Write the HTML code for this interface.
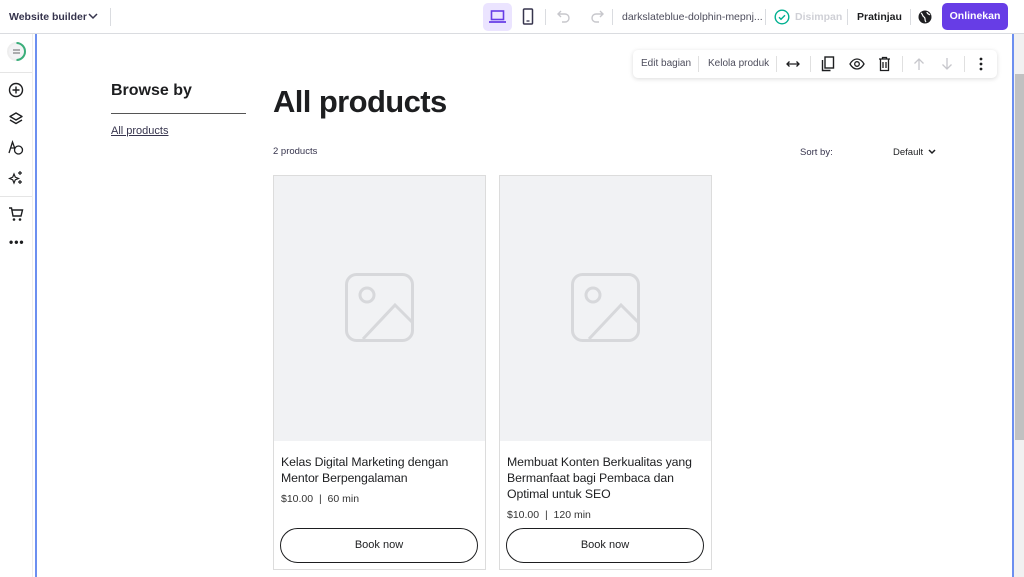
<!DOCTYPE html>
<html><head><meta charset="utf-8"><style>
*{box-sizing:border-box;margin:0;padding:0}
body{width:1024px;height:577px;overflow:hidden;background:#fff;font-family:"Liberation Sans",sans-serif;color:#1d1e20;position:relative}
.top{position:absolute;left:0;top:0;width:1024px;height:34px;border-bottom:1px solid #dadce0;background:#fff}
.abs{position:absolute}
.side{position:absolute;left:0;top:34px;width:35px;height:543px;background:#fff}
.vl{position:absolute;top:34px;width:2px;height:543px;background:#6c8ff0}
svg{display:block}
.card{position:absolute;top:175px;width:213px;height:395px;border:1px solid #dcdcdc;background:#fff}
.img{height:265px;background:#f1f2f4;position:relative}
.img svg{position:absolute;left:71px;top:97px}
.t{position:absolute;left:7px;font-family:"Liberation Sans",sans-serif;font-size:12.3px;line-height:16px;letter-spacing:-0.1px;color:#1d1e20;white-space:nowrap}
.p{position:absolute;left:7px;font-family:"Liberation Sans",sans-serif;font-size:10.5px;color:#333}
.btn{position:absolute;left:6px;width:198px;height:35px;border:1px solid #1d1e20;border-radius:18px;text-align:center;line-height:33px;font-family:"Liberation Sans",sans-serif;font-size:11px}
</style></head><body>
<div class="top">
 <div class="abs" style="left:9px;top:11px;font-size:10.5px;font-weight:bold;color:#36344d">Website builder</div>
 <svg class="abs" style="left:88px;top:12px" width="10" height="8"><path d="M1 2l4 4 4-4" stroke="#36344d" stroke-width="1.5" fill="none"/></svg>
 <div class="abs" style="left:110px;top:8px;width:1px;height:18px;background:#dadce0"></div>
 <div class="abs" style="left:483px;top:3px;width:29px;height:28px;background:#ebe4ff;border-radius:5px"></div>
 <svg class="abs" style="left:489px;top:10px" width="17" height="14"><rect x="2.5" y="1" width="12" height="8.5" stroke="#673de6" stroke-width="1.6" fill="none"/><path d="M0 12h17" stroke="#673de6" stroke-width="1.8"/></svg>
 <svg class="abs" style="left:522px;top:8px" width="12" height="17"><rect x="1.5" y="1" width="9" height="15" rx="1" stroke="#36344d" stroke-width="1.5" fill="none"/><path d="M4.5 13h3" stroke="#36344d" stroke-width="1.3"/></svg>
 <div class="abs" style="left:545px;top:9px;width:1px;height:16px;background:#dadce0"></div>
 <svg class="abs" style="left:557px;top:10px" width="14" height="13"><path d="M4 1L1 4l3 3M1 4h7a4 4 0 010 8H5" stroke="#c7c7cc" stroke-width="1.4" fill="none"/></svg>
 <svg class="abs" style="left:590px;top:10px" width="14" height="13"><path d="M10 1l3 3-3 3M13 4H6a4 4 0 000 8h3" stroke="#c7c7cc" stroke-width="1.4" fill="none"/></svg>
 <div class="abs" style="left:612px;top:9px;width:1px;height:16px;background:#dadce0"></div>
 <div class="abs" style="left:622px;top:11px;font-size:10.5px;color:#4d4d5c">darkslateblue-dolphin-mepnj...</div>
 <div class="abs" style="left:765px;top:9px;width:1px;height:16px;background:#dadce0"></div>
 <svg class="abs" style="left:774px;top:9px" width="16" height="16"><circle cx="8" cy="8" r="6.8" stroke="#00b090" stroke-width="1.4" fill="none"/><path d="M5 8.2l2 2 4-4" stroke="#00b090" stroke-width="1.4" fill="none"/></svg>
 <div class="abs" style="left:795px;top:11px;font-size:10.5px;font-weight:bold;color:#cfd0d6">Disimpan</div>
 <div class="abs" style="left:847px;top:9px;width:1px;height:16px;background:#dadce0"></div>
 <div class="abs" style="left:857px;top:11px;font-size:10.5px;font-weight:bold;color:#1d1e20">Pratinjau</div>
 <div class="abs" style="left:910px;top:9px;width:1px;height:16px;background:#dadce0"></div>
 <svg class="abs" style="left:918px;top:10px" width="14" height="14"><circle cx="7" cy="7" r="6.5" fill="#1d1e20"/><path d="M3 3c2 1 1 3 3 4s0 3 2 5M9 2c0 2 2 2 3 3" stroke="#fff" stroke-width="1.2" fill="none"/></svg>
 <div class="abs" style="left:942px;top:3px;width:66px;height:27px;background:#673de6;border-radius:5px;color:#fff;font-size:10.5px;font-weight:bold;text-align:center;line-height:27px">Onlinekan</div>
</div>
<div class="side">
 <svg class="abs" style="left:6px;top:7px" width="21" height="21"><circle cx="10.5" cy="10.5" r="8.5" stroke="#eee" stroke-width="2" fill="#f3f3f5"/><path d="M10.5 2a8.5 8.5 0 010 17" stroke="#3aae7a" stroke-width="2" fill="none"/><path d="M7 9h7M7 12h7" stroke="#666" stroke-width="1"/></svg>
 <div class="abs" style="left:0;top:38px;width:33px;height:1px;background:#e5e5e5"></div>
 <svg class="abs" style="left:8px;top:48px" width="16" height="16"><circle cx="8" cy="8" r="6.5" stroke="#1d1e20" stroke-width="1.4" fill="none"/><path d="M8 4.5v7M4.5 8h7" stroke="#1d1e20" stroke-width="1.4"/></svg>
 <svg class="abs" style="left:8px;top:77px" width="16" height="16"><path d="M8 2l6 3.5-6 3.5-6-3.5zM2 9l6 3.5 6-3.5" stroke="#1d1e20" stroke-width="1.4" fill="none" stroke-linejoin="round"/></svg>
 <svg class="abs" style="left:8px;top:106px" width="16" height="16"><path d="M1 13L4.5 2 7 9M2.5 8h4" stroke="#1d1e20" stroke-width="1.3" fill="none"/><circle cx="10.5" cy="10" r="4" stroke="#1d1e20" stroke-width="1.3" fill="none"/></svg>
 <svg class="abs" style="left:8px;top:136px" width="16" height="16"><path d="M6 4l1.3 3.2L10.5 8.5 7.3 9.8 6 13 4.7 9.8 1.5 8.5 4.7 7.2z" stroke="#1d1e20" stroke-width="1.2" fill="none"/><path d="M12 1v4M10 3h4M12 10v4M10 12h4" stroke="#1d1e20" stroke-width="1.2"/></svg>
 <div class="abs" style="left:0;top:162px;width:33px;height:1px;background:#e5e5e5"></div>
 <svg class="abs" style="left:8px;top:172px" width="16" height="16"><path d="M1 2h2.5l1.5 8h8l1.5-6H4" stroke="#1d1e20" stroke-width="1.4" fill="none"/><circle cx="6" cy="13.5" r="1.3" fill="#1d1e20"/><circle cx="12" cy="13.5" r="1.3" fill="#1d1e20"/></svg>
 <div class="abs" style="left:9px;top:203px;font-size:12px;font-weight:bold;letter-spacing:1px;color:#1d1e20;line-height:10px">•••</div>
</div>
<div class="abs" style="left:32px;top:34px;width:1px;height:543px;background:#eee"></div>
<div class="vl" style="left:35px"></div>
<div class="vl" style="left:1012px"></div>
<div class="abs" style="left:1014px;top:34px;width:10px;height:543px;background:#f1f1f1"></div>
<div class="abs" style="left:1015px;top:74px;width:9px;height:366px;background:#c1c1c1"></div>

<div class="abs" style="left:633px;top:50px;width:364px;height:28px;background:#fff;border-radius:5px;box-shadow:0 1px 5px rgba(0,0,0,.15)">
 <div class="abs" style="left:8px;top:8px;font-size:10px;color:#4d4d5c">Edit bagian</div>
 <div class="abs" style="left:65px;top:6px;width:1px;height:16px;background:#e0e0e0"></div>
 <div class="abs" style="left:75px;top:8px;font-size:10px;color:#4d4d5c">Kelola produk</div>
 <div class="abs" style="left:143px;top:6px;width:1px;height:16px;background:#e0e0e0"></div>
 <svg class="abs" style="left:153px;top:9px" width="14" height="10"><path d="M1 5h12M3.5 2.5L1 5l2.5 2.5M10.5 2.5L13 5l-2.5 2.5" stroke="#1d1e20" stroke-width="1.3" fill="none"/></svg>
 <div class="abs" style="left:177px;top:6px;width:1px;height:16px;background:#e0e0e0"></div>
 <svg class="abs" style="left:188px;top:6px" width="14" height="16"><rect x="4" y="1" width="8.5" height="11" stroke="#1d1e20" stroke-width="1.4" fill="none"/><path d="M1.5 4v10.5h8" stroke="#1d1e20" stroke-width="1.4" fill="none"/></svg>
 <svg class="abs" style="left:216px;top:8px" width="16" height="12"><path d="M1 6c2-3.5 4-5 7-5s5 1.5 7 5c-2 3.5-4 5-7 5S3 9.5 1 6z" stroke="#1d1e20" stroke-width="1.3" fill="none"/><circle cx="8" cy="6" r="2.3" stroke="#1d1e20" stroke-width="1.3" fill="none"/></svg>
 <svg class="abs" style="left:245px;top:6px" width="13" height="16"><path d="M1 3h11M4.5 3V1.5h4V3M2.5 3v11.5h8V3M5 6v6M8 6v6" stroke="#1d1e20" stroke-width="1.3" fill="none"/></svg>
 <div class="abs" style="left:269px;top:6px;width:1px;height:16px;background:#e0e0e0"></div>
 <svg class="abs" style="left:280px;top:7px" width="12" height="14"><path d="M6 13V2M1.5 6.5L6 2l4.5 4.5" stroke="#c7c7cc" stroke-width="1.3" fill="none"/></svg>
 <svg class="abs" style="left:308px;top:7px" width="12" height="14"><path d="M6 1v11M1.5 7.5L6 12l4.5-4.5" stroke="#c7c7cc" stroke-width="1.3" fill="none"/></svg>
 <div class="abs" style="left:331px;top:6px;width:1px;height:16px;background:#e0e0e0"></div>
 <svg class="abs" style="left:346px;top:7px" width="4" height="14"><circle cx="2" cy="2" r="1.4" fill="#1d1e20"/><circle cx="2" cy="7" r="1.4" fill="#1d1e20"/><circle cx="2" cy="12" r="1.4" fill="#1d1e20"/></svg>
</div>

<div class="abs" style="left:111px;top:82px;font-size:16px;font-weight:bold;color:#1d1e20">Browse by</div>
<div class="abs" style="left:111px;top:113px;width:135px;height:1px;background:#555"></div>
<div class="abs" style="left:111px;top:125px;font-size:11px;color:#36344d;text-decoration:underline">All products</div>
<div class="abs" style="left:273px;top:84px;font-family:'Liberation Sans',sans-serif;font-size:31px;font-weight:bold;letter-spacing:-0.6px;color:#1d1e20">All products</div>
<div class="abs" style="left:273px;top:146px;font-size:9.5px;color:#36344d">2 products</div>
<div class="abs" style="left:800px;top:147px;font-size:9.5px;color:#36344d">Sort by:</div>
<div class="abs" style="left:893px;top:147px;font-size:9.5px;color:#1d1e20">Default</div>
<svg class="abs" style="left:928px;top:149px" width="8" height="6"><path d="M1 1l3 3 3-3" stroke="#1d1e20" stroke-width="1.5" fill="none"/></svg>

<div class="card" style="left:273px">
 <div class="img"><svg width="70" height="70"><rect x="1.5" y="1.5" width="66" height="66" rx="10" stroke="#d7d8db" stroke-width="3" fill="none"/><circle cx="22" cy="22" r="7" stroke="#d7d8db" stroke-width="3" fill="none"/><path d="M18 66L50 32l17 17" stroke="#d7d8db" stroke-width="3" fill="none"/></svg></div>
 <div class="t" style="top:278px">Kelas Digital Marketing dengan<br>Mentor Berpengalaman</div>
 <div class="p" style="top:317px">$10.00 &nbsp;| &nbsp;60 min</div>
 <div class="btn" style="top:352px">Book now</div>
</div>
<div class="card" style="left:499px">
 <div class="img"><svg width="70" height="70"><rect x="1.5" y="1.5" width="66" height="66" rx="10" stroke="#d7d8db" stroke-width="3" fill="none"/><circle cx="22" cy="22" r="7" stroke="#d7d8db" stroke-width="3" fill="none"/><path d="M18 66L50 32l17 17" stroke="#d7d8db" stroke-width="3" fill="none"/></svg></div>
 <div class="t" style="top:278px">Membuat Konten Berkualitas yang<br>Bermanfaat bagi Pembaca dan<br>Optimal untuk SEO</div>
 <div class="p" style="top:333px">$10.00 &nbsp;| &nbsp;120 min</div>
 <div class="btn" style="top:352px">Book now</div>
</div>
</body></html>
